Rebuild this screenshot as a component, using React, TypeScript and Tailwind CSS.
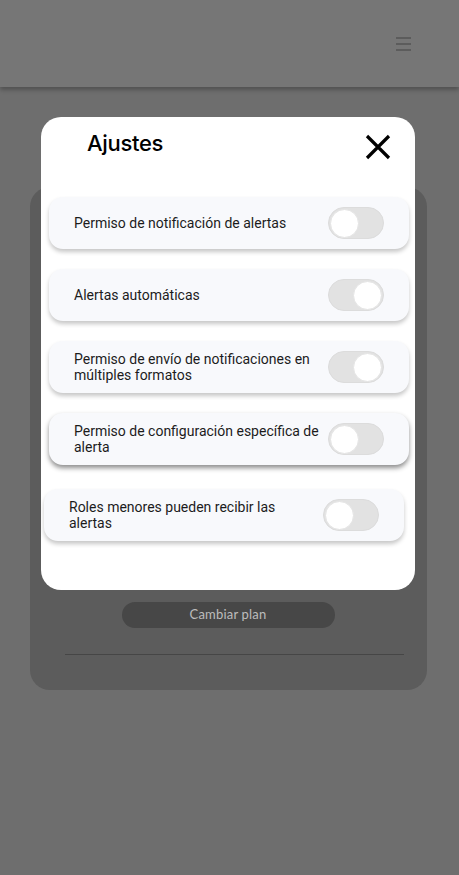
import React, { useState } from 'react'

type Setting = { id: string; label: string; on: boolean }

const initialSettings: Setting[] = [
  { id: 'notif', label: 'Permiso de notificación de alertas', on: false },
  { id: 'auto', label: 'Alertas automáticas', on: true },
  { id: 'multi', label: 'Permiso de envío de notificaciones en múltiples formatos', on: true },
  { id: 'config', label: 'Permiso de configuración específica de alerta', on: false },
]

const Toggle: React.FC<{ on: boolean; onClick: () => void }> = ({ on, onClick }) => (
  <button
    onClick={onClick}
    className={`flex h-[32px] w-[56px] shrink-0 items-center rounded-full border border-[#dcdcdc] bg-[#e2e2e2] px-[1px] ${on ? 'justify-end' : 'justify-start'}`}
  >
    <span className="h-[29px] w-[29px] rounded-full border border-[#e4e4e4] bg-white" />
  </button>
)

const SettingRow: React.FC<{ setting: Setting; onToggle: () => void; className?: string }> = ({ setting, onToggle, className }) => (
  <div className={`flex h-[52px] items-center justify-between rounded-[14px] bg-[#f8f9fc] pl-[25px] pr-[25px] ${className ?? ''}`}>
    <span className="max-w-[250px] text-[14px] leading-[16px] text-[#1c1c1c]">{setting.label}</span>
    <Toggle on={setting.on} onClick={onToggle} />
  </div>
)

export default function App() {
  const [settings, setSettings] = useState(initialSettings)
  const [minorRoles, setMinorRoles] = useState(false)

  const toggle = (id: string) =>
    setSettings((prev) => prev.map((s) => (s.id === id ? { ...s, on: !s.on } : s)))

  return (
    <div className="relative min-h-[875px] w-full bg-[#6e6e6e] font-['Roboto',sans-serif]">
      {/* header */}
      <div className="flex h-[87px] items-center justify-end bg-[#767676] pr-[48px] shadow-[0_3px_4px_rgba(0,0,0,0.25)]">
        <div className="flex flex-col gap-[4px]">
          <span className="h-[2px] w-[15px] bg-[#5c5c5c]" />
          <span className="h-[2px] w-[15px] bg-[#5c5c5c]" />
          <span className="h-[2px] w-[15px] bg-[#5c5c5c]" />
        </div>
      </div>

      {/* page card behind modal */}
      <div className="ml-[30px] mt-[100px] flex h-[503px] w-[397px] flex-col items-center justify-end rounded-[20px] bg-[#5c5c5c] pb-[35px]">
        <button className="ml-[-1px] h-[26px] w-[213px] rounded-full bg-[#474747] font-['Lato',sans-serif] text-[13px] tracking-[0.2px] text-[#bdbdbd]">
          Cambiar plan
        </button>
        <div className="ml-[35px] mt-[26px] h-px w-[339px] self-start bg-[#464646]" />
      </div>

      {/* modal */}
      <div className="absolute left-[41px] top-[117px] flex h-[473px] w-[374px] flex-col rounded-[20px] bg-white pl-[8px] pr-[6px]">
        <div className="flex h-[80px] items-start justify-between pl-[38px] pr-[18px] pt-[10px]">
          <h2 className="font-['Inter',sans-serif] text-[22px] font-medium tracking-[-0.3px] text-black">Ajustes</h2>
          <button className="mt-[7px]">
            <svg width="26" height="26" viewBox="0 0 26 26" fill="none" stroke="black" strokeWidth="3.2">
              <path d="M2 2L24 24M24 2L2 24" />
            </svg>
          </button>
        </div>
        <div className="flex flex-col gap-[20px]">
          {settings.map((s) => (
            <SettingRow
              key={s.id}
              setting={s}
              onToggle={() => toggle(s.id)}
              className={s.id === 'config' ? 'shadow-[0_3px_5px_rgba(0,0,0,0.45)]' : 'shadow-[0_3px_4px_rgba(0,0,0,0.22)]'}
            />
          ))}
        </div>
        <SettingRow
          setting={{ id: 'minor', label: 'Roles menores pueden recibir las alertas', on: minorRoles }}
          onToggle={() => setMinorRoles(!minorRoles)}
          className="ml-[-5px] mr-[5px] mt-[24px] shadow-[0_3px_4px_rgba(0,0,0,0.22)]"
        />
      </div>
    </div>
  )
}
